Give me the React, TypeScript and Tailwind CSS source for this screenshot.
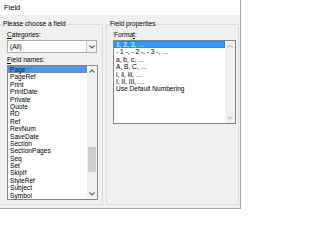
import React from "react";

const fieldNames = [
  "Page",
  "PageRef",
  "Print",
  "PrintDate",
  "Private",
  "Quote",
  "RD",
  "Ref",
  "RevNum",
  "SaveDate",
  "Section",
  "SectionPages",
  "Seq",
  "Set",
  "SkipIf",
  "StyleRef",
  "Subject",
  "Symbol",
];

const formats = [
  "1, 2, 3, …",
  "- 1 -, - 2 -, - 3 -, …",
  "a, b, c, …",
  "A, B, C, …",
  "i, ii, iii, …",
  "I, II, III, …",
  "Use Default Numbering",
];

function Chevron({ up = false, color = "#606060" }: { up?: boolean; color?: string }) {
  return (
    <svg width="6" height="4" viewBox="0 0 6 4" className={up ? "rotate-180" : ""}>
      <path d="M0.5 0.5 L3 3 L5.5 0.5" fill="none" stroke={color} strokeWidth="1.1" />
    </svg>
  );
}

function Scrollbar({ active }: { active: boolean }) {
  const c = active ? "#606060" : "#bfbfbf";
  return (
    <div className="flex w-[10px] flex-col bg-[#f0f0f0]">
      <div className="flex h-[10px] items-center justify-center">
        <Chevron up color={c} />
      </div>
      <div className="flex flex-1 flex-col">
        {active && (
          <>
            <div className="h-[71px]" />
            <div className="mx-[1px] h-[25px] bg-[#cdcdcd]" />
          </>
        )}
      </div>
      <div className="flex h-[10px] items-center justify-center">
        <Chevron color={c} />
      </div>
    </div>
  );
}

export default function App() {
  return (
    <div
      className="flex h-[209px] w-[241px] flex-col overflow-hidden border-r border-b border-[#a6a6a6] bg-[#f0f0f0] text-[6.6px] leading-[8px] text-black"
      style={{ fontFamily: '"Liberation Sans", Arial, sans-serif' }}
    >
      <div className="flex h-[15px] items-center bg-white pl-[4px] text-[7.5px]">Field</div>

      <div className="flex flex-1 gap-[3px] pt-[5px] pb-[3px]">
        {/* left group */}
        <fieldset className="-ml-[1px] h-[185px] w-[104px] border border-[#dcdcdc]">
          <legend className="ml-[2px] px-[1px]">Please choose a field</legend>
          <div className="flex flex-col pl-[7px]">
            <div className="mt-[3px]">
              <span className="underline">C</span>ategories:
            </div>
            <div className="mt-[1px] flex h-[13px] w-[90px] items-center border border-[#adadad] bg-white">
              <span className="flex-1 pl-[2px]">(All)</span>
              <div className="flex h-full w-[10px] items-center justify-center border-l border-[#cfcfcf] bg-[#f3f3f3]">
                <Chevron />
              </div>
            </div>
            <div className="mt-[3px]">
              <span className="underline">F</span>ield names:
            </div>
            <div className="mt-[1px] flex h-[135px] w-[91px] border border-[#828790] bg-white">
              <div className="flex-1">
                {fieldNames.map((n, i) => (
                  <div
                    key={n}
                    className={
                      i === 0
                        ? "border border-dotted border-[#c87941] bg-[#3d9bf3] pl-[1px] text-[#10203a]"
                        : "border border-transparent pl-[1px]"
                    }
                    style={{ height: "7.4px", lineHeight: "5.4px" }}
                  >
                    {n}
                  </div>
                ))}
              </div>
              <Scrollbar active />
            </div>
          </div>
        </fieldset>

        {/* right group */}
        <fieldset className="h-[185px] w-[133px] border border-[#dcdcdc]">
          <legend className="ml-[2px] px-[1px]">Field properties</legend>
          <div className="flex flex-col pl-[6px]">
            <div className="mt-[3px] pl-[1px]">
              Forma<span className="underline">t</span>:
            </div>
            <div className="mt-[1px] flex h-[84px] w-[123px] border border-[#828790] bg-white">
              <div className="flex-1">
                {formats.map((f, i) => (
                  <div
                    key={f}
                    className={
                      i === 0
                        ? "border border-[#2a86e6] bg-[#3399ff] pl-[1px] text-white"
                        : "border border-transparent pl-[1px]"
                    }
                    style={{ height: "7.4px", lineHeight: "5.4px" }}
                  >
                    {f}
                  </div>
                ))}
              </div>
              <Scrollbar active={false} />
            </div>
          </div>
        </fieldset>
      </div>
    </div>
  );
}
